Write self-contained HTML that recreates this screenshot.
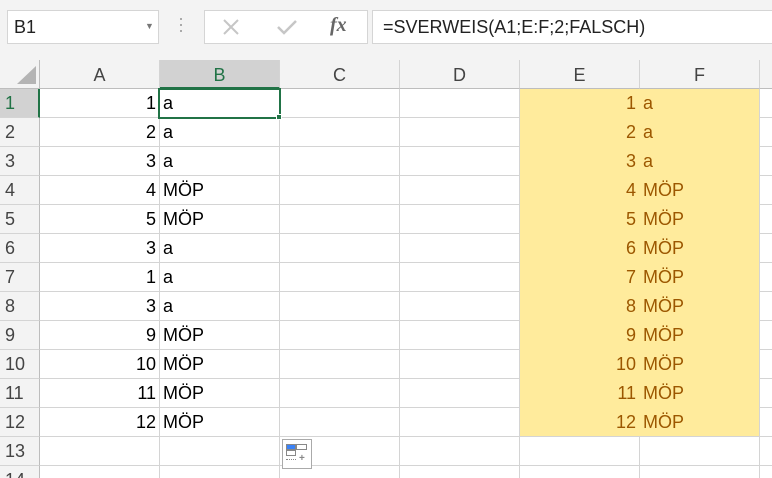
<!DOCTYPE html>
<html><head><meta charset="utf-8"><style>
*{margin:0;padding:0;box-sizing:border-box}
html,body{width:772px;height:478px;overflow:hidden}
body{background:#fff;font-family:"Liberation Sans",sans-serif;position:relative}
.top{position:absolute;left:0;top:0;width:772px;height:60px;background:#f3f3f3}
.box{position:absolute;background:#fff;border:1px solid #d5d5d5}
.hdr{position:absolute;top:60px;height:29px;background:#f3f3f3;border-right:1px solid #d4d4d4;border-bottom:1px solid #bdbdbd;font-size:18px;color:#444;text-align:center;line-height:30px}
.rh{position:absolute;left:0;width:40px;height:29px;background:#f3f3f3;border-bottom:1px solid #d4d4d4;border-right:1px solid #bdbdbd;font-size:18px;color:#444;padding-left:5px;line-height:29px}
.vl{position:absolute;top:89px;width:1px;height:389px;background:#d4d4d4}
.hl{position:absolute;left:40px;width:732px;height:1px;background:#d4d4d4}
.c{position:absolute;height:29px;line-height:29px;font-size:18px;color:#000}
.r{text-align:right}
.y{color:#9c5700}
</style></head><body>
<div class="top"></div>
<div class="box" style="left:7px;top:10px;width:152px;height:34px;font-size:18px;line-height:32px;padding-left:6px;color:#222">B1<span style="position:absolute;left:137px;top:-1px;font-size:9px;color:#777">▼</span></div>
<div style="position:absolute;left:180px;top:18px;width:2px;height:2px;background:#aaa;box-shadow:0 6px 0 #aaa,0 12px 0 #aaa"></div>
<div class="box" style="left:204px;top:10px;width:164px;height:34px"></div>
<svg style="position:absolute;left:222px;top:19px" width="18" height="16"><path d="M2 1L16 15M16 1L2 15" stroke="#c6c6c6" stroke-width="2"/></svg>
<svg style="position:absolute;left:276px;top:19px" width="22" height="16"><path d="M2 8L8 14L20 2" stroke="#c6c6c6" stroke-width="2.5" fill="none"/></svg>
<div style="position:absolute;left:330px;top:14px;font-family:'Liberation Serif',serif;font-style:italic;font-weight:bold;font-size:20px;color:#666">fx</div>
<div class="box" style="left:372px;top:10px;width:410px;height:34px;font-size:18px;line-height:32px;padding-left:10px;color:#222">=SVERWEIS(A1;E:F;2;FALSCH)</div>
<div style="position:absolute;left:0;top:60px;width:40px;height:29px;background:#f3f3f3;border-right:1px solid #bdbdbd;border-bottom:1px solid #bdbdbd"></div>
<svg style="position:absolute;left:15px;top:65px" width="22" height="20"><path d="M21 1V19H2Z" fill="#b4b4b4"/></svg>
<div class="hdr" style="left:40px;width:120px">A</div>
<div class="hdr" style="left:160px;width:120px;background:#d2d2d2;color:#217346;border-bottom:2px solid #217346">B</div>
<div class="hdr" style="left:280px;width:120px">C</div>
<div class="hdr" style="left:400px;width:120px">D</div>
<div class="hdr" style="left:520px;width:120px">E</div>
<div class="hdr" style="left:640px;width:120px">F</div>
<div class="hdr" style="left:760px;width:20px"></div>
<div class="vl" style="left:159px"></div><div class="vl" style="left:279px"></div><div class="vl" style="left:399px"></div><div class="vl" style="left:519px"></div><div class="vl" style="left:639px"></div><div class="vl" style="left:759px"></div>
<div class="hl" style="top:117px"></div><div class="hl" style="top:146px"></div><div class="hl" style="top:175px"></div><div class="hl" style="top:204px"></div><div class="hl" style="top:233px"></div><div class="hl" style="top:262px"></div><div class="hl" style="top:291px"></div><div class="hl" style="top:320px"></div><div class="hl" style="top:349px"></div><div class="hl" style="top:378px"></div><div class="hl" style="top:407px"></div><div class="hl" style="top:436px"></div><div class="hl" style="top:465px"></div>
<div style="position:absolute;left:520px;top:89px;width:239px;height:347px;background:#ffeb9c"></div>
<div class="rh" style="top:89px;background:#d2d2d2;color:#217346;border-right:2px solid #217346">1</div>
<div class="rh" style="top:118px">2</div><div class="rh" style="top:147px">3</div><div class="rh" style="top:176px">4</div><div class="rh" style="top:205px">5</div><div class="rh" style="top:234px">6</div><div class="rh" style="top:263px">7</div><div class="rh" style="top:292px">8</div><div class="rh" style="top:321px">9</div><div class="rh" style="top:350px">10</div><div class="rh" style="top:379px">11</div><div class="rh" style="top:408px">12</div><div class="rh" style="top:437px">13</div><div class="rh" style="top:466px">14</div>
<div id="cells"></div>
<div style="position:absolute;left:158px;top:88px;width:123px;height:31px;border:2px solid #217346"></div>
<div style="position:absolute;left:276px;top:114px;width:6px;height:6px;background:#217346;border:1px solid #fff"></div>
<div style="position:absolute;left:282px;top:439px;width:30px;height:30px;border:1px solid #aaa;background:#fff">
<div style="position:absolute;left:3px;top:4px;width:10px;height:6px;background:#3b82f6;border:1px solid #888"></div>
<div style="position:absolute;left:13px;top:4px;width:11px;height:6px;border:1px solid #888"></div>
<div style="position:absolute;left:3px;top:10px;width:10px;height:6px;border:1px solid #888"></div>
<div style="position:absolute;left:3px;top:19px;width:10px;height:1px;border-top:1px dotted #888"></div>
<div style="position:absolute;left:16px;top:13px;font-size:10px;color:#888;font-weight:bold">+</div>
</div>
<script>
var A=[1,2,3,4,5,3,1,3,9,10,11,12],B=["a","a","a","MÖP","MÖP","a","a","a","MÖP","MÖP","MÖP","MÖP"],F=["a","a","a","MÖP","MÖP","MÖP","MÖP","MÖP","MÖP","MÖP","MÖP","MÖP"],h="";
for(var i=0;i<12;i++){var t=89+i*29;
h+='<div class="c r" style="left:40px;width:116px;top:'+t+'px">'+A[i]+'</div>';
h+='<div class="c" style="left:163px;top:'+t+'px">'+B[i]+'</div>';
h+='<div class="c r y" style="left:520px;width:116px;top:'+t+'px">'+(i+1)+'</div>';
h+='<div class="c y" style="left:643px;top:'+t+'px">'+F[i]+'</div>';}
document.getElementById("cells").innerHTML=h;
</script>
</body></html>
